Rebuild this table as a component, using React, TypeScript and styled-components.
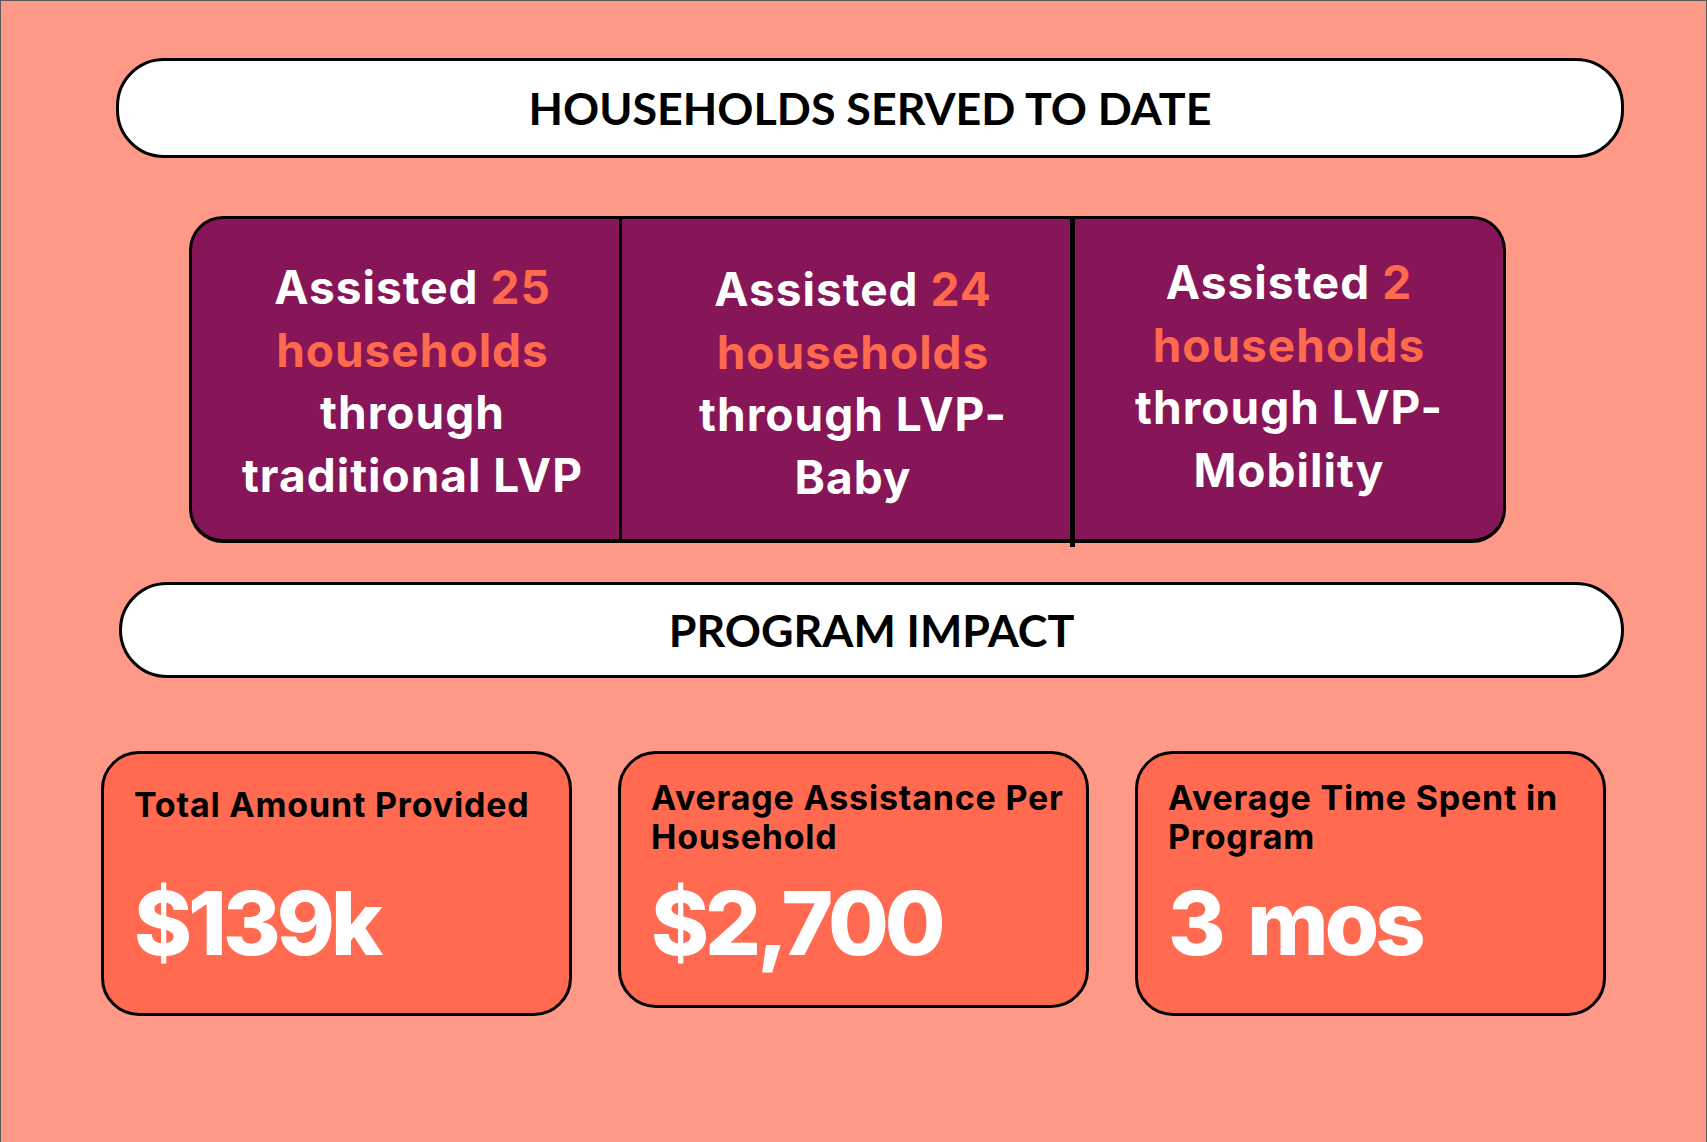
import styled, { createGlobalStyle } from 'styled-components'

const GlobalStyle = createGlobalStyle`
  html, body {
    margin: 0;
    padding: 0;
    background: #ff9987;
  }
  * {
    box-sizing: border-box;
  }
`

const Page = styled.div`
  width: 1707px;
  height: 1142px;
  background: #ff9987;
  border: 1px solid #5a5a5a;
  border-bottom: none;
  display: flex;
  flex-direction: column;
  font-family: Inter, 'Noto Sans', sans-serif;
`

type PillProps = {
  $top: number
  $left: number
  $width: number
  $height: number
}

const Pill = styled.div<PillProps>`
  margin-top: ${({ $top }) => $top}px;
  margin-left: ${({ $left }) => $left}px;
  width: ${({ $width }) => $width}px;
  height: ${({ $height }) => $height}px;
  background: #fff;
  border: 3px solid #000;
  border-radius: 48px;
  display: flex;
  align-items: center;
  justify-content: center;
  font-family: Lato, 'Liberation Sans', sans-serif;
  font-weight: 700;
  font-size: 44.8px;
  color: #000;
`

const Programs = styled.div`
  margin-top: 58px;
  margin-left: 188px;
  width: 1317px;
  height: 327px;
  background: #861657;
  border: 3px solid #000;
  border-bottom-width: 4px;
  border-radius: 34px;
  display: grid;
  grid-template-columns: 427px 451px 1fr;
`

// $shift moves the text block down (positive) or up (negative)
const Program = styled.div<{ $divider?: number; $shift?: number; $nudge?: number }>`
  position: relative;
  display: flex;
  align-items: center;
  justify-content: center;
  text-align: center;
  color: #fff;
  font-weight: 700;
  font-size: 46px;
  letter-spacing: 1px;
  line-height: 62.5px;
  padding-top: ${({ $shift = 0 }) => Math.max($shift, 0) * 2}px;
  padding-bottom: ${({ $shift = 0 }) => Math.max(-$shift, 0) * 2}px;
  padding-left: ${({ $nudge = 0 }) => $nudge * 2}px;
  ${({ $divider }) => $divider && `border-left: ${$divider}px solid #000;`}
`

const Tail = styled.span`
  position: absolute;
  left: -5px;
  bottom: -8px;
  width: 5px;
  height: 8px;
  background: #000;
`

const Highlight = styled.span`
  color: #ff6a4f;
`

const Cards = styled.div`
  margin-top: 73px;
  margin-left: 100px;
  display: flex;
  align-items: flex-start;
  gap: 46px;
`

const Card = styled.div<{ $height: number }>`
  width: 471px;
  height: ${({ $height }) => $height}px;
  background: #ff6a50;
  border: 3px solid #000;
  border-radius: 38px;
  padding: 0 14px 0 30px;
  display: flex;
  flex-direction: column;
`

const CardTitle = styled.div<{ $top: number }>`
  height: 112px;
  padding-top: ${({ $top }) => $top}px;
  color: #000;
  font-weight: 700;
  font-size: 34px;
  letter-spacing: 0.8px;
  line-height: 39px;
`

const CardValue = styled.div`
  margin-top: 13px;
  color: #fff;
  font-weight: 800;
  font-size: 88px;
  line-height: 1;
  letter-spacing: -4px;
  word-spacing: 10px;
`

const stats = [
  { title: 'Total Amount Provided', value: '$139k', top: 31, height: 265 },
  { title: 'Average Assistance Per Household', value: '$2,700', top: 24, height: 257 },
  { title: 'Average Time Spent in Program', value: '3 mos', top: 24, height: 265 },
]

export default function App() {
  return (
    <>
      <GlobalStyle />
      <Page>
        <Pill $top={57} $left={115} $width={1508} $height={100}>
          HOUSEHOLDS SERVED TO DATE
        </Pill>
        <Programs>
          <Program $shift={2} $nudge={7}>
            <div>
              Assisted <Highlight>25</Highlight>
              <br />
              <Highlight>households</Highlight>
              <br />
              through
              <br />
              traditional LVP
            </div>
          </Program>
          <Program $divider={3} $shift={4} $nudge={7}>
            <div>
              Assisted <Highlight>24</Highlight>
              <br />
              <Highlight>households</Highlight>
              <br />
              through LVP-
              <br />
              Baby
            </div>
          </Program>
          <Program $divider={5} $shift={-3}>
            <Tail />
            <div>
              Assisted <Highlight>2</Highlight>
              <br />
              <Highlight>households</Highlight>
              <br />
              through LVP-
              <br />
              Mobility
            </div>
          </Program>
        </Programs>
        <Pill $top={39} $left={118} $width={1505} $height={96}>
          PROGRAM IMPACT
        </Pill>
        <Cards>
          {stats.map((s) => (
            <Card key={s.title} $height={s.height}>
              <CardTitle $top={s.top}>{s.title}</CardTitle>
              <CardValue>{s.value}</CardValue>
            </Card>
          ))}
        </Cards>
      </Page>
    </>
  )
}
